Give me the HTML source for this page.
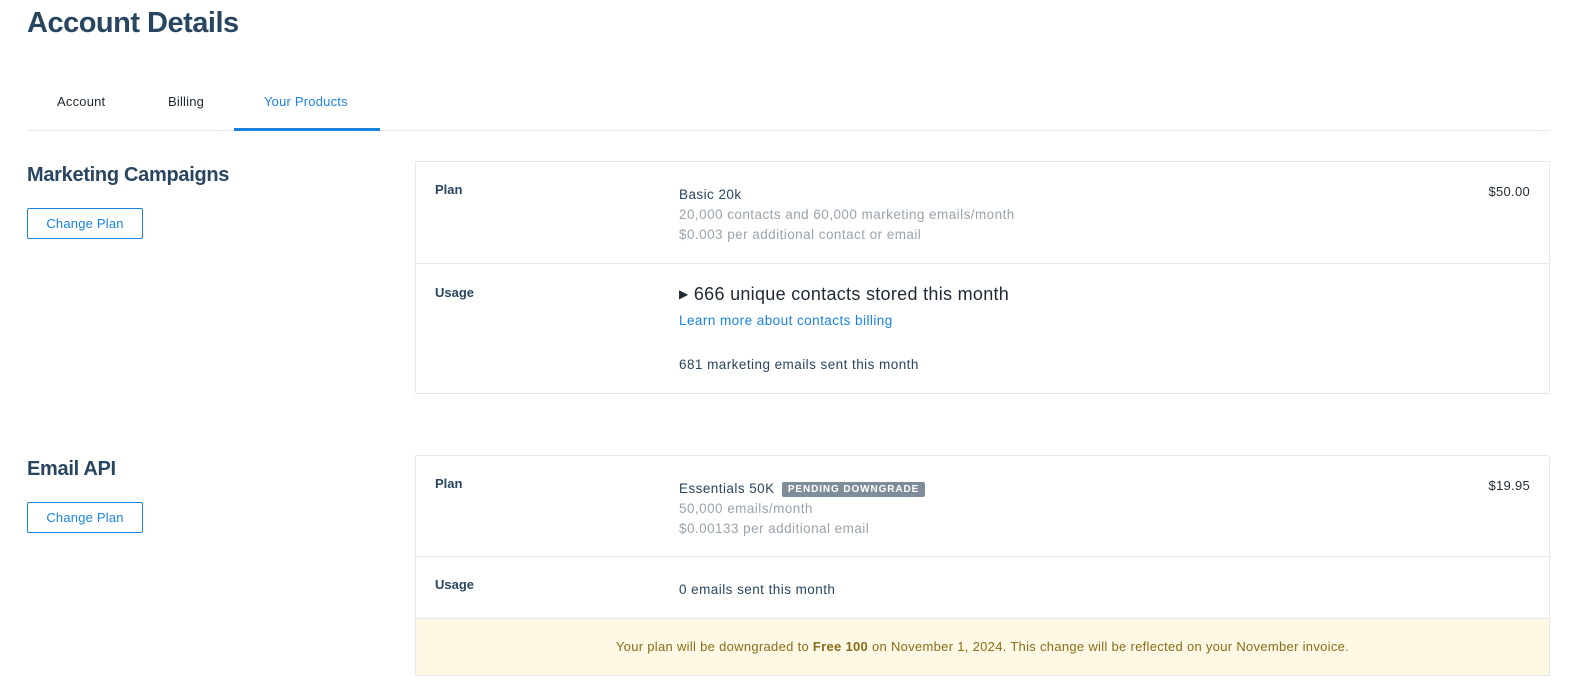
<!DOCTYPE html>
<html><head><meta charset="utf-8"><style>
*{margin:0;padding:0;box-sizing:border-box}
body{width:1570px;height:693px;background:#fff;font-family:"Liberation Sans",sans-serif;color:#294661;position:relative;overflow:hidden}
.a{position:absolute;white-space:nowrap}
h1{position:absolute;left:27px;top:7px;font-size:29px;font-weight:bold;color:#294661;letter-spacing:-0.5px}
.tab{position:absolute;top:94px;font-size:13px;color:#1f2a36;letter-spacing:0.2px}
.sec{position:absolute;left:27px;font-size:20px;font-weight:bold;color:#294661;letter-spacing:-0.3px}
.btn{position:absolute;left:27px;width:116px;height:31px;border:1px solid #1a82e2;border-radius:2px;color:#1a82e2;font-size:13px;text-align:center;line-height:29px;letter-spacing:0.2px}
.card{position:absolute;left:415px;width:1135px;border:1px solid #e6e9ed;border-radius:2px}
.row{position:relative;border-bottom:1px solid #e6e9ed}
.lbl{position:absolute;left:19px;font-size:13px;font-weight:bold;color:#294661}
.v{position:absolute;left:263px;font-size:13.5px;color:#294661;line-height:20px;white-space:nowrap;letter-spacing:0.45px}
.g{color:#9aa3ad}
.price{position:absolute;right:19px;font-size:13px;color:#1f2a36;letter-spacing:0.3px}
.badge{display:inline-block;background:#7f8d9a;color:#fff;font-size:10px;font-weight:bold;letter-spacing:0.9px;padding:0 6px;line-height:15px;vertical-align:1px;border-radius:2px;margin-left:3px}
</style></head><body>
<h1>Account Details</h1>
<div class="tab" style="left:57px">Account</div>
<div class="tab" style="left:168px">Billing</div>
<div class="tab" style="left:264px;color:#1a82e2">Your Products</div>
<div class="a" style="left:27px;top:130px;width:1523px;height:1px;background:#e6e9ed"></div>
<div class="a" style="left:234px;top:128px;width:146px;height:3px;background:#1a82e2"></div>

<div class="sec" style="top:164px">Marketing Campaigns</div>
<div class="btn" style="top:208px">Change Plan</div>
<div class="card" style="top:161px;height:233px">
 <div class="row" style="height:102px">
  <div class="lbl" style="top:20px">Plan</div>
  <div class="v" style="top:23px">Basic 20k<br><span class="g">20,000 contacts and 60,000 marketing emails/month<br>$0.003 per additional contact or email</span></div>
  <div class="price" style="top:22px">$50.00</div>
 </div>
 <div class="row" style="height:130px;border-bottom:none">
  <div class="lbl" style="top:21px">Usage</div>
  <div class="v" style="top:20px;font-size:18px;color:#1f2a36;letter-spacing:0.3px"><span style="font-size:12px;vertical-align:2px">&#9654;</span> 666 unique contacts stored this month</div>
  <div class="v" style="top:47px;color:#1a82e2">Learn more about contacts billing</div>
  <div class="v" style="top:91px">681 marketing emails sent this month</div>
 </div>
</div>

<div class="sec" style="top:458px">Email API</div>
<div class="btn" style="top:502px">Change Plan</div>
<div class="card" style="top:455px;height:221px">
 <div class="row" style="height:101px">
  <div class="lbl" style="top:20px">Plan</div>
  <div class="v" style="top:23px">Essentials 50K <span class="badge">PENDING DOWNGRADE</span><br><span class="g">50,000 emails/month<br>$0.00133 per additional email</span></div>
  <div class="price" style="top:22px">$19.95</div>
 </div>
 <div class="row" style="height:62px">
  <div class="lbl" style="top:20px">Usage</div>
  <div class="v" style="top:23px">0 emails sent this month</div>
 </div>
 <div style="height:56px;background:#fef8e4;text-align:center;font-size:13px;color:#8a6d1a;line-height:56px;letter-spacing:0.3px">Your plan will be downgraded to <b>Free 100</b> on November 1, 2024. This change will be reflected on your November invoice.</div>
</div>
</body></html>
